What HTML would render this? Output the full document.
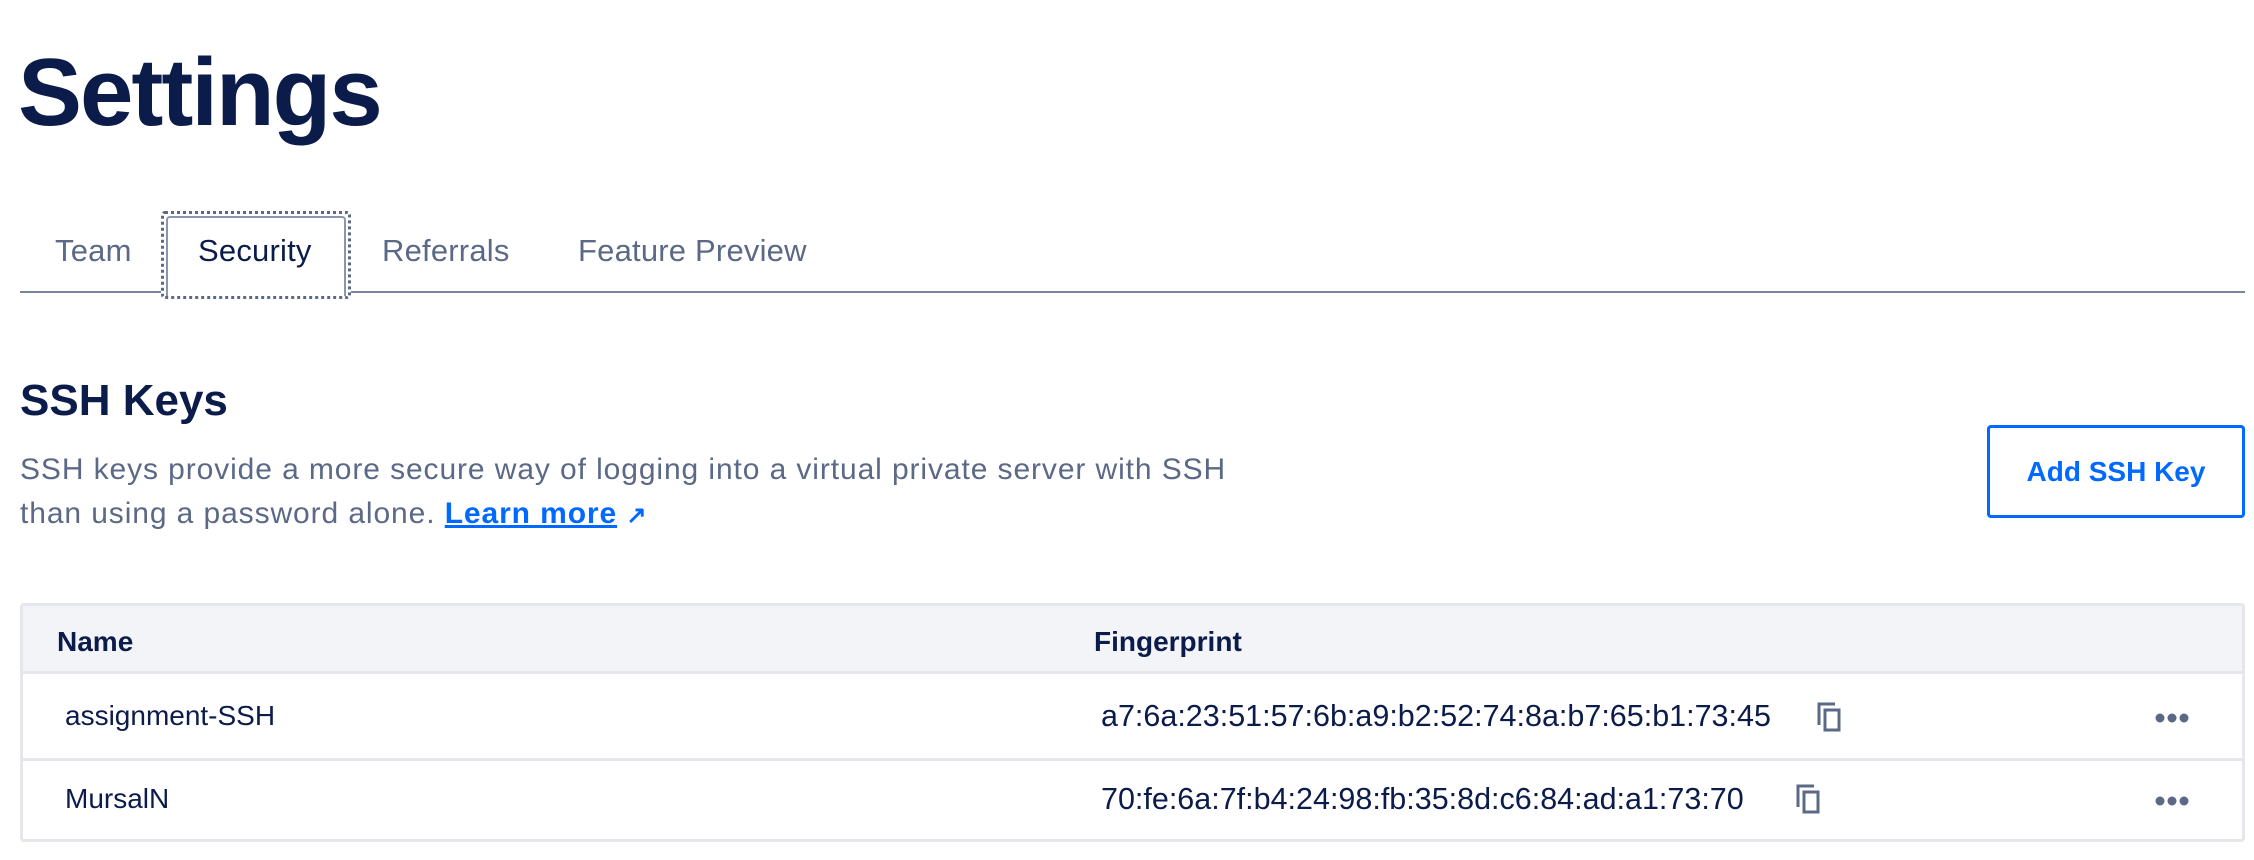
<!DOCTYPE html>
<html><head><meta charset="utf-8"><style>
*{margin:0;padding:0;box-sizing:border-box}
body{width:2254px;height:860px;background:#fff;font-family:"Liberation Sans",sans-serif;color:#031b4e;position:relative;overflow:hidden}
.a{position:absolute;white-space:nowrap}
h1{position:absolute;left:18px;top:38px;font-size:96px;font-weight:bold;letter-spacing:-2px;color:#0b1b4a}
.tab{position:absolute;top:233px;font-size:31px;color:#5b6987;letter-spacing:0.2px}
.line{position:absolute;left:20px;top:291px;width:2225px;height:2px;background:#7a86a0}
.focus{position:absolute;left:161px;top:211px;width:190px;height:88px;border:3px dotted #5b6987;border-radius:4px;background:#fff}
.focus2{position:absolute;left:166px;top:216px;width:180px;height:80px;border:2px solid #8b96ad;border-bottom:none;border-radius:4px 4px 0 0}
h2{position:absolute;left:20px;top:376px;font-size:44px;font-weight:bold;color:#0b1b4a;letter-spacing:0px}
.desc{position:absolute;left:20px;top:448px;font-size:30px;line-height:44px;color:#5b6987;letter-spacing:0.9px}
.desc a{color:#0069ff;font-weight:bold;text-decoration:underline}
.btn{position:absolute;left:1987px;top:425px;width:258px;height:93px;border:3px solid #0069ff;border-radius:4px;color:#0069ff;font-weight:bold;font-size:28px;display:flex;align-items:center;justify-content:center}
.tbl{position:absolute;left:20px;top:603px;width:2225px;height:239px;border:3px solid #e5e7ec;border-radius:4px}
.hd{position:absolute;left:0;top:0;width:100%;height:68px;background:#f3f4f8;border-bottom:3px solid #e5e7ec}
.r2{position:absolute;left:0;top:152px;width:100%;height:3px;background:#e5e7ec}
.t{font-size:28px;color:#0b1b4a}
.fp{font-size:30.5px}
</style></head><body>
<h1>Settings</h1>
<div class="line"></div>
<div class="focus"></div><div class="focus2"></div>
<div class="tab" style="left:55px">Team</div>
<div class="tab" style="left:198px;color:#0b1b4a">Security</div>
<div class="tab" style="left:382px">Referrals</div>
<div class="tab" style="left:578px">Feature Preview</div>
<h2>SSH Keys</h2>
<div class="desc">SSH keys provide a more secure way of logging into a virtual private server with SSH<br>than using a password alone. <a>Learn more</a> <b style="color:#0069ff;font-size:24px">&#8599;</b></div>
<div class="btn">Add SSH Key</div>
<div class="tbl">
<div class="hd"></div><div class="r2"></div>
<div class="a t" style="left:34px;top:20px;font-weight:bold">Name</div>
<div class="a t" style="left:1071px;top:20px;font-weight:bold">Fingerprint</div>
<div class="a t" style="left:42px;top:94px">assignment-SSH</div>
<div class="a t fp" style="left:1078px;top:93px">a7:6a:23:51:57:6b:a9:b2:52:74:8a:b7:65:b1:73:45</div>
<div class="a t" style="left:42px;top:177px">MursalN</div>
<div class="a t fp" style="left:1078px;top:176px">70:fe:6a:7f:b4:24:98:fb:35:8d:c6:84:ad:a1:73:70</div>
<svg class="a" style="left:1793px;top:95px" width="30" height="32" viewBox="0 0 30 32"><path d="M3 24V3h16" fill="none" stroke="#5b6987" stroke-width="3"/><rect x="9" y="9" width="14" height="20" fill="none" stroke="#5b6987" stroke-width="3"/></svg>
<svg class="a" style="left:1772px;top:177px" width="30" height="32" viewBox="0 0 30 32"><path d="M3 24V3h16" fill="none" stroke="#5b6987" stroke-width="3"/><rect x="9" y="9" width="14" height="20" fill="none" stroke="#5b6987" stroke-width="3"/></svg>
<svg class="a" style="left:2132px;top:107px" width="36" height="10"><circle cx="5" cy="5" r="4.5" fill="#5b6987"/><circle cx="17" cy="5" r="4.5" fill="#5b6987"/><circle cx="29" cy="5" r="4.5" fill="#5b6987"/></svg>
<svg class="a" style="left:2132px;top:190px" width="36" height="10"><circle cx="5" cy="5" r="4.5" fill="#5b6987"/><circle cx="17" cy="5" r="4.5" fill="#5b6987"/><circle cx="29" cy="5" r="4.5" fill="#5b6987"/></svg>
</div>
</body></html>
